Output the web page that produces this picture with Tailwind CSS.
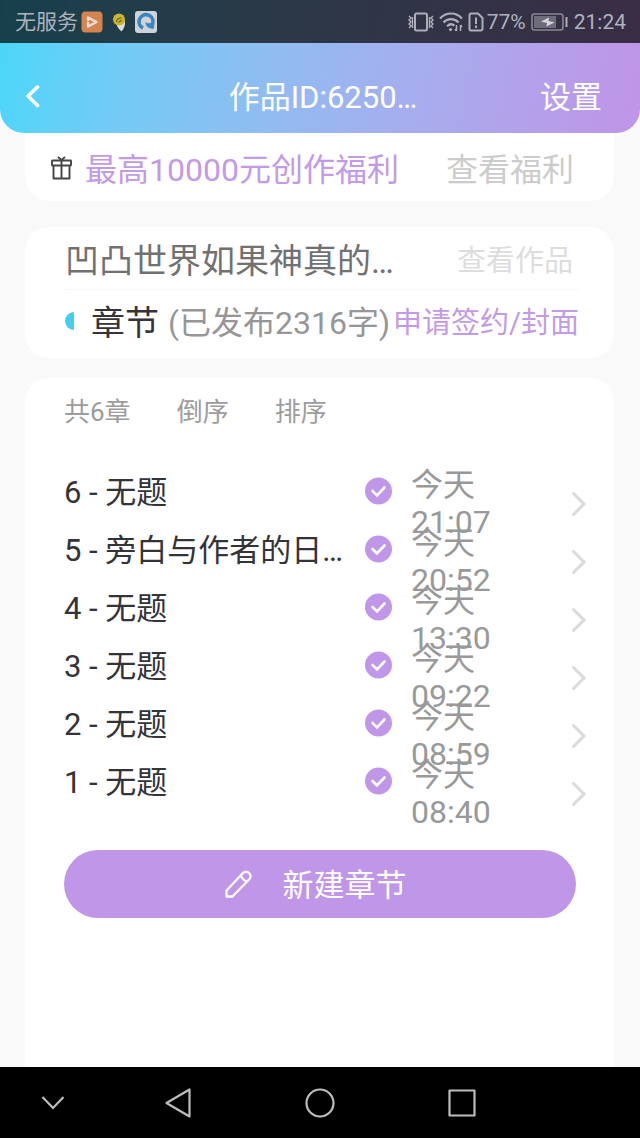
<!DOCTYPE html>
<html lang="zh-CN">
<head>
<meta charset="utf-8">
<meta name="viewport" content="width=device-width, initial-scale=1">
<title>作品管理</title>
<script src="https://cdn.jsdelivr.net/npm/@tailwindcss/browser@4"></script>
</head>
<body class="flex min-h-screen flex-col bg-[#f9f9f9] font-['Roboto','Noto_Sans_CJK_SC',sans-serif] text-[#333338]">

<header class="rounded-b-3xl bg-linear-100 from-[#47d7f9] to-[#c094e7] text-white">
  <div class="flex h-[43px] items-center bg-black/70 pr-[14px] pl-[15px] pt-px text-[21px] leading-6 text-[#adb3bd]">
    <span>无服务</span>
    <svg class="ml-[3px] size-[22px]" viewBox="0 0 22 22"><rect x="0.5" y="0.5" width="21" height="21" rx="4" fill="#d5834f"/><path d="M7 15.500V12M7 9V6.500l8.500 4.500L8 15" fill="none" stroke="#eadfd8" stroke-width="2.400" stroke-linecap="round" stroke-linejoin="round"/></svg>
    <svg class="ml-[9px] h-[19px] w-[14px]" viewBox="0 0 14 19"><path d="M4.500 11 13 8c.5 4-1 8-3.500 10.500C7.500 17 5 14 4.500 11z" fill="#dcdcd4"/><circle cx="7" cy="6.500" r="6" fill="#c9b62c"/><path d="M4.500 9c0-2.500 2-4 5-4M6.500 9.500c1-1.500 2-2 3.500-1.500" fill="none" stroke="#5d5a24" stroke-width="1.100"/></svg>
    <svg class="ml-[9px] size-[22px]" viewBox="0 0 22 22"><rect width="22" height="22" rx="3" fill="#ced3d8"/><path d="M8 17A7 7 0 1 1 18 11" fill="none" stroke="#3b84bd" stroke-width="3.600"/><path d="M10.500 11c0 4 2.500 6.500 8 7 .8-2 1-4.500 1-7h-3c-1 1.500-3.500 2-6 0z" fill="#3b84bd"/></svg>
    <span class="flex-1"></span>
    <svg class="h-5 w-[26px]" viewBox="0 0 26 20" fill="none" stroke="#adaebb" stroke-width="2"><rect x="7" y="1.500" width="12" height="17" rx="1.500"/><path d="M1 4l2 2-2 2 2 2-2 2 2 2-2 2M4.500 5v11M25 4l-2 2 2 2-2 2 2 2-2 2 2 2M21.500 5v11" stroke-width="1.400"/></svg>
    <svg class="ml-[5px] h-5 w-6" viewBox="0 0 24 20" fill="none" stroke="#adaebb" stroke-width="2.200"><path d="M1 6.500C7-.2 17-.2 23 6.500M4.500 10.500c4-4.500 11-4.500 15 0M8 14.200c2.500-2.500 5-2.500 7.500-.5"/><circle cx="11.500" cy="17.500" r="1.600" fill="#adaebb" stroke="none"/><path d="M17.500 13v6m-1.500-2 1.500 2M21.500 19v-6m1.500 2-1.500-2" stroke-width="1.500"/></svg>
    <svg class="ml-[5px] h-5 w-4" viewBox="0 0 16 20" fill="none" stroke="#adaebb" stroke-width="2"><path d="M3 1.500h7L14.500 6v10.500a2 2 0 0 1-2 2H3a1.500 1.500 0 0 1-1.500-1.500V3A1.500 1.500 0 0 1 3 1.500z"/><path d="M8 5.500V12M8 13.500V16"/></svg>
    <span class="ml-[3px]">77%</span>
    <svg class="ml-[5px] h-[18px] w-[37px]" viewBox="0 0 37 18"><rect x="1" y="1" width="31" height="16" rx="2.500" fill="none" stroke="#898794" stroke-width="1.600"/><rect x="3" y="3" width="22" height="12" fill="#6e6b7b"/><path d="M10 8.500l8-4-.5 3.500 6 1.500-8 4 .5-3.500z" fill="#d5d3da"/><path d="M35.500 4v10" stroke="#adaebb" stroke-width="2"/></svg>
    <span class="ml-[6px]">21:24</span>
  </div>
  <div class="grid h-[90px] grid-cols-[1fr_auto_1fr] items-center pt-5 pr-[38px] pl-11 text-[31px] leading-10">
    <button type="button" aria-label="返回" class="-ml-5 w-5">
      <svg class="mb-1 h-6 w-5" viewBox="0 0 20 24" fill="none" stroke="#fff" stroke-width="3.600" stroke-linecap="round" stroke-linejoin="round"><path d="M13.500 3 4 12l9.500 9.500"/></svg>
    </button>
    <h1>作品ID:6250…</h1>
    <button type="button" class="justify-self-end">设置</button>
  </div>
</header>

<main class="flex flex-1 flex-col pr-[26px] pl-[25px]">
  <section class="flex h-[68px] items-center rounded-b-3xl bg-white pt-[6px] pr-10 pl-[26px] text-[32px] leading-10">
    <svg class="mr-[13px] mb-1 h-6 w-[21px]" viewBox="0 0 21 24" fill="none" stroke="#454545" stroke-width="1.900" stroke-linejoin="round"><rect x="1" y="4.500" width="19" height="5" rx="0.500"/><path d="M2.500 9.500v13h16v-13M10.500 4.500v18M7 1l3.500 3L14 1"/></svg>
    <span class="text-[#c29ae6]">最高10000元创作福利</span>
    <a href="#" class="ml-auto text-[#cccccc]">查看福利</a>
  </section>

  <section class="mt-[26px] h-[131px] rounded-3xl bg-white pr-[35px] pl-10">
    <div class="flex h-[63px] items-center justify-between border-b border-[#f7f7f7] pt-[6px] pr-[6px]">
      <h2 class="text-[34px] leading-10 text-[#717171]">凹凸世界如果神真的…</h2>
      <a href="#" class="text-[29px] leading-10 text-[#dddddd]">查看作品</a>
    </div>
    <div class="flex h-[66px] items-center whitespace-nowrap">
      <span class="mb-1 h-[18px] w-[9px] rounded-l-full bg-[#45cfee]"></span>
      <span class="ml-[17px] text-[34px] leading-10">章节</span>
      <span class="ml-[9px] text-[32px] leading-10 text-[#969696]">(已发布2316字)</span>
      <a href="#" class="ml-auto text-[29px] leading-10 text-[#c29ae6]">申请签约/封面</a>
    </div>
  </section>

  <section class="mt-5 flex-1 rounded-t-3xl bg-white pr-[27px] pl-[39px]">
    <div class="flex items-center gap-[46px] pt-4 text-[26px] leading-9 text-[#9c9c9c]">
      <span>共6章</span>
      <button type="button">倒序</button>
      <button type="button">排序</button>
    </div>

    <ul class="mt-[37px] text-[31px]">
      <li class="flex h-[58px] items-start">
        <a href="#" class="w-[301px] leading-[52px]">6 - 无题</a>
        <svg class="h-12 w-[27px]" viewBox="0 0 27 48"><circle cx="13.500" cy="24" r="13.500" fill="#c096e8"/><path d="M7.500 24l4.500 4.500 7.500-8" fill="none" stroke="#fff" stroke-width="2.600" stroke-linecap="round"/></svg>
        <time class="ml-[19px] w-[120px] text-[32px] leading-[37px] text-[#999999]">今天 21:07</time>
        <svg class="ml-auto h-[74px] w-4" viewBox="0 0 16 74" fill="none" stroke="#dadada" stroke-width="3" stroke-linecap="round"><path d="M2.500 26.500 13 37 2.500 47.500"/></svg>
      </li>
      <li class="flex h-[58px] items-start">
        <a href="#" class="w-[301px] leading-[52px]">5 - 旁白与作者的日…</a>
        <svg class="h-12 w-[27px]" viewBox="0 0 27 48"><circle cx="13.500" cy="24" r="13.500" fill="#c096e8"/><path d="M7.500 24l4.500 4.500 7.500-8" fill="none" stroke="#fff" stroke-width="2.600" stroke-linecap="round"/></svg>
        <time class="ml-[19px] w-[120px] text-[32px] leading-[37px] text-[#999999]">今天 20:52</time>
        <svg class="ml-auto h-[74px] w-4" viewBox="0 0 16 74" fill="none" stroke="#dadada" stroke-width="3" stroke-linecap="round"><path d="M2.500 26.500 13 37 2.500 47.500"/></svg>
      </li>
      <li class="flex h-[58px] items-start">
        <a href="#" class="w-[301px] leading-[52px]">4 - 无题</a>
        <svg class="h-12 w-[27px]" viewBox="0 0 27 48"><circle cx="13.500" cy="24" r="13.500" fill="#c096e8"/><path d="M7.500 24l4.500 4.500 7.500-8" fill="none" stroke="#fff" stroke-width="2.600" stroke-linecap="round"/></svg>
        <time class="ml-[19px] w-[120px] text-[32px] leading-[37px] text-[#999999]">今天 13:30</time>
        <svg class="ml-auto h-[74px] w-4" viewBox="0 0 16 74" fill="none" stroke="#dadada" stroke-width="3" stroke-linecap="round"><path d="M2.500 26.500 13 37 2.500 47.500"/></svg>
      </li>
      <li class="flex h-[58px] items-start">
        <a href="#" class="w-[301px] leading-[52px]">3 - 无题</a>
        <svg class="h-12 w-[27px]" viewBox="0 0 27 48"><circle cx="13.500" cy="24" r="13.500" fill="#c096e8"/><path d="M7.500 24l4.500 4.500 7.500-8" fill="none" stroke="#fff" stroke-width="2.600" stroke-linecap="round"/></svg>
        <time class="ml-[19px] w-[120px] text-[32px] leading-[37px] text-[#999999]">今天 09:22</time>
        <svg class="ml-auto h-[74px] w-4" viewBox="0 0 16 74" fill="none" stroke="#dadada" stroke-width="3" stroke-linecap="round"><path d="M2.500 26.500 13 37 2.500 47.500"/></svg>
      </li>
      <li class="flex h-[58px] items-start">
        <a href="#" class="w-[301px] leading-[52px]">2 - 无题</a>
        <svg class="h-12 w-[27px]" viewBox="0 0 27 48"><circle cx="13.500" cy="24" r="13.500" fill="#c096e8"/><path d="M7.500 24l4.500 4.500 7.500-8" fill="none" stroke="#fff" stroke-width="2.600" stroke-linecap="round"/></svg>
        <time class="ml-[19px] w-[120px] text-[32px] leading-[37px] text-[#999999]">今天 08:59</time>
        <svg class="ml-auto h-[74px] w-4" viewBox="0 0 16 74" fill="none" stroke="#dadada" stroke-width="3" stroke-linecap="round"><path d="M2.500 26.500 13 37 2.500 47.500"/></svg>
      </li>
      <li class="flex h-[58px] items-start">
        <a href="#" class="w-[301px] leading-[52px]">1 - 无题</a>
        <svg class="h-12 w-[27px]" viewBox="0 0 27 48"><circle cx="13.500" cy="24" r="13.500" fill="#c096e8"/><path d="M7.500 24l4.500 4.500 7.500-8" fill="none" stroke="#fff" stroke-width="2.600" stroke-linecap="round"/></svg>
        <time class="ml-[19px] w-[120px] text-[32px] leading-[37px] text-[#999999]">今天 08:40</time>
        <svg class="ml-auto h-[74px] w-4" viewBox="0 0 16 74" fill="none" stroke="#dadada" stroke-width="3" stroke-linecap="round"><path d="M2.500 26.500 13 37 2.500 47.500"/></svg>
      </li>
    </ul>

    <div class="mt-[35px] pr-[11px]">
      <button type="button" class="flex h-[68px] w-full items-center justify-center gap-[31px] rounded-full bg-[#c096e8] pt-1 pr-[9px] text-[31px] leading-10 text-white">
        <svg class="mb-1 h-7 w-[27px]" viewBox="0 0 27 28" fill="none" stroke="#fff" stroke-width="2.300" stroke-linejoin="round"><path d="M1.500 26.500v-6L18 3a4.200 4.200 0 0 1 6 0l.3.300a4.200 4.200 0 0 1 0 6L7.500 26.500zM16 5.500a9 9 0 0 0 6 6"/></svg>
        新建章节
      </button>
    </div>
  </section>
</main>

<nav class="flex h-[71px] items-center bg-black" aria-label="系统导航">
  <button type="button" aria-label="隐藏导航栏" class="flex w-1/6 justify-center"><svg class="h-4 w-6" viewBox="0 0 24 16" fill="none" stroke="#bdbdbd" stroke-width="2.200"><path d="M1.500 2 12 13 22.500 2"/></svg></button>
  <button type="button" aria-label="返回" class="flex w-2/9 justify-center"><svg class="h-[30px] w-[26px]" viewBox="0 0 26 30" fill="none" stroke="#bdbdbd" stroke-width="2.200" stroke-linejoin="round"><path d="M24.500 1.500v27L1.500 15z"/></svg></button>
  <button type="button" aria-label="主屏幕" class="flex w-2/9 justify-center"><svg class="size-[30px]" viewBox="0 0 30 30" fill="none" stroke="#bdbdbd" stroke-width="2.200"><circle cx="15" cy="15" r="13.500"/></svg></button>
  <button type="button" aria-label="最近任务" class="flex w-2/9 justify-center"><svg class="size-7" viewBox="0 0 28 28" fill="none" stroke="#bdbdbd" stroke-width="2.200" stroke-linejoin="round"><rect x="1.500" y="1.500" width="25" height="25"/></svg></button>
</nav>
</body>
</html>
